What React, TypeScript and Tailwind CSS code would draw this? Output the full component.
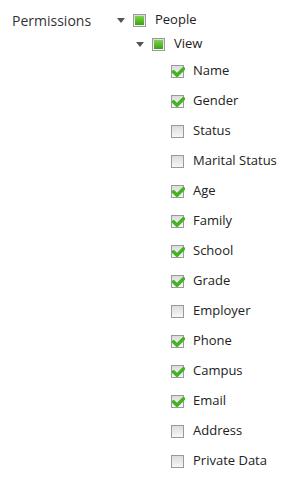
type State = "checked" | "unchecked" | "partial";

const leaves: { label: string; checked: boolean }[] = [
  { label: "Name", checked: true },
  { label: "Gender", checked: true },
  { label: "Status", checked: false },
  { label: "Marital Status", checked: false },
  { label: "Age", checked: true },
  { label: "Family", checked: true },
  { label: "School", checked: true },
  { label: "Grade", checked: true },
  { label: "Employer", checked: false },
  { label: "Phone", checked: true },
  { label: "Campus", checked: true },
  { label: "Email", checked: true },
  { label: "Address", checked: false },
  { label: "Private Data", checked: false },
];

const Box = ({ state }: { state: State }) => (
  <span className="relative flex h-[13px] w-[13px] shrink-0 items-center justify-center border border-[#9a9a9a] bg-gradient-to-b from-[#dcdcdc] to-[#f7f7f7]">
    {state === "partial" && (
      <span className="h-[9px] w-[9px] bg-gradient-to-b from-[#7fd54a] to-[#3aa012]" />
    )}
    {state === "checked" && (
      <svg width="13" height="11" viewBox="0 0 13 11" className="absolute left-[0px] top-[1px]">
        <path d="M1.5 4.8 L5 8.3 L11.5 1.8" fill="none" stroke="#42b321" strokeWidth="3.4" strokeLinecap="round" strokeLinejoin="round" />
      </svg>
    )}
  </span>
);

const Toggle = ({ open }: { open?: boolean }) => (
  <span className="flex w-[16px] shrink-0 items-center justify-center">
    {open && (
      <svg width="8" height="5" viewBox="0 0 8 5">
        <path d="M0 0 H8 L4 5 Z" fill="#555" />
      </svg>
    )}
  </span>
);

const Row = ({
  indent,
  state,
  label,
  open,
  leaf,
}: {
  indent: number;
  state: State;
  label: string;
  open?: boolean;
  leaf?: boolean;
}) => (
  <div
    className={`flex items-center ${leaf ? "h-[30px]" : "h-6"} ${
      indent === 0 ? "" : indent === 1 ? "pl-[19px]" : "pl-[38px]"
    }`}
  >
    <Toggle open={open} />
    <span className="ml-1">
      <Box state={state} />
    </span>
    <span className="ml-[9px] text-[13px] text-[#222]">{label}</span>
  </div>
);

export default function App() {
  return (
    <div
      className="flex h-[479px] w-[289px] bg-white pt-[8px]"
      style={{ fontFamily: '"Open Sans", "Liberation Sans", sans-serif' }}
    >
      <div className="flex h-6 w-[113px] shrink-0 items-center pl-3 text-[14px] text-[#333]">
        Permissions
      </div>
      <div className="flex flex-col">
        <Row indent={0} state="partial" label="People" open />
        <Row indent={1} state="partial" label="View" open />
        {leaves.map((l) => (
          <Row
            key={l.label}
            indent={2}
            state={l.checked ? "checked" : "unchecked"}
            label={l.label}
            leaf
          />
        ))}
      </div>
    </div>
  );
}
